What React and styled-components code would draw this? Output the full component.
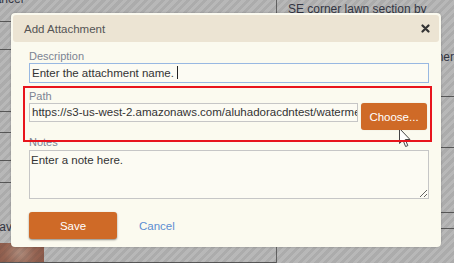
import React from "react";
import styled, { createGlobalStyle } from "styled-components";

const GlobalStyle = createGlobalStyle`
html, body {
  margin: 0;
  padding: 0;
}
body {
  width: 454px;
  height: 263px;
  overflow: hidden;
  background: #fff;
  font-family: "Liberation Sans", Arial, sans-serif;
}
`;

const Screen = styled.div`
position: relative;
width: 454px;
height: 263px;
overflow: hidden;
`;

/* the page that sits behind the modal */
const Page = styled.div`
display: flex;
margin-left: -14px;
color: #2b2f45;
font-size: 12px;
`;

const LeftCol = styled.div`
width: 328px;
display: flex;
flex-direction: column;
border-right: 1px solid #777;
`;

const RightCol = styled.div`
flex: 1;
display: flex;
flex-direction: column;
`;

const Cell = styled.div`
height: ${p => p.$h}px;
box-sizing: border-box;
border-bottom: 1px solid #666;
padding: ${p => p.$pad || "0 0 0 11px"};
line-height: 16px;
white-space: nowrap;
overflow: hidden;
`;

const Photo = styled.div`
width: 58px;
height: 28px;
margin-top: 8px;
background: radial-gradient(circle at 34px 10px, #f0b9a0 0, #c97a5e 40%, #a3523c 100%);
`;

const Overlay = styled.div`
position: absolute;
inset: 0;
background: repeating-linear-gradient(
  135deg,
  rgba(62, 62, 62, 0.43) 0 3px,
  rgba(62, 62, 62, 0.37) 3px 6px
);
`;

const Dialog = styled.div`
position: absolute;
left: 11px;
top: 13px;
width: 430px;
height: 234px;
box-sizing: border-box;
padding: 2px;
background: #fbfaef;
border-radius: 4px;
box-shadow: 0 0 2px rgba(0, 0, 0, 0.25);
`;

const Header = styled.div`
height: 27px;
display: flex;
align-items: center;
justify-content: space-between;
padding: 0 9px 0 11px;
background: #ece4d3;
border-radius: 3px;
`;

const Title = styled.span`
font-size: 11.5px;
color: #555;
`;

const Body = styled.div`
display: flex;
flex-direction: column;
padding: 7px 10px 0 16px;
`;

const Label = styled.div`
font-size: 11px;
line-height: 14px;
color: #7b8493;
`;

const Field = styled.div`
height: ${p => p.$h || 20}px;
box-sizing: border-box;
border: 1px solid ${p => (p.$focused ? "#98b8e2" : "#c6c6c6")};
background: #fcfbf3;
padding: 0 2px;
font-size: 11.5px;
line-height: ${p => (p.$h || 20) - 2}px;
color: #333;
white-space: nowrap;
overflow: hidden;
flex: ${p => (p.$grow ? 1 : "none")};
`;

const Caret = styled.span`
display: inline-block;
width: 1px;
height: 13px;
margin-left: 3px;
vertical-align: -2px;
background: #222;
`;

const Highlight = styled.div`
position: relative;
z-index: 1;
margin: 3px -3px -7px -6px;
padding: 1px 3px 10px 4px;
border: 2px solid #e8141c;
`;

const PathRow = styled.div`
display: flex;
align-items: flex-start;
gap: 3px;
`;

const Button = styled.button`
width: ${p => p.$w}px;
height: 27px;
border: none;
border-radius: 3px;
background: #cf6a27;
color: #fff;
font-family: "Liberation Sans", Arial, sans-serif;
font-size: 11.5px;
padding: 0;
box-shadow: ${p => (p.$raised ? "0 1px 2px rgba(0,0,0,0.45)" : "0 0 1px rgba(0,0,0,0.2)")};
cursor: pointer;
`;

const NoteArea = styled.textarea`
margin-top: 1px;
height: 49px;
box-sizing: border-box;
border: 1px solid #c6c6c6;
background: #fcfbf3;
padding: 3px 1px;
font-family: "Liberation Sans", Arial, sans-serif;
font-size: 11.5px;
color: #333;
outline: none;
resize: both;
`;

const Actions = styled.div`
display: flex;
align-items: center;
gap: 22px;
margin-top: 13px;
`;

const LinkButton = styled.span`
font-size: 11.5px;
color: #5b8ed2;
cursor: pointer;
`;

const Pointer = styled.svg`
position: absolute;
left: 399px;
top: 128px;
`;

function CloseIcon() {
  return (
    <svg width="9" height="9" viewBox="0 0 9 9">
      <path d="M1.5 1.5 L7.5 7.5 M7.5 1.5 L1.5 7.5" stroke="#333" strokeWidth="2.2" strokeLinecap="round" />
    </svg>
  );
}

export default function App() {
  return (
    <Screen>
      <GlobalStyle />
      <Page>
        <LeftCol>
          <Cell $h={22} $pad="0">
            <div style={{ marginTop: -9 }}>Cancel</div>
          </Cell>
          <Cell $h={28} />
          <Cell $h={62} />
          <Cell $h={21} />
          <Cell $h={28} />
          <Cell $h={22} />
          <Cell $h={80} $pad="36px 0 0 0">
            <div style={{ marginLeft: 0 }}>Leaves.</div>
            <Photo />
          </Cell>
        </LeftCol>
        <RightCol>
          <Cell $h={97} $pad="1px 0 0 11px">
            SE corner lawn section by
            <br />
            <br />
            <br />
            the back fence, near the corner
          </Cell>
          <Cell $h={51} $pad="28px 0 0 11px">Drainage pipe; pad</Cell>
          <Cell $h={65} $pad="28px 0 0 11px">Leaves</Cell>
          <Cell $h={16} />
        </RightCol>
      </Page>

      <Overlay />

      <Dialog>
        <Header>
          <Title>Add Attachment</Title>
          <CloseIcon />
        </Header>
        <Body>
          <Label>Description</Label>
          <Field $focused>
            Enter the attachment name.
            <Caret />
          </Field>
          <Highlight>
            <Label>Path</Label>
            <PathRow>
              <Field $h={19} $grow>
                https://s3-us-west-2.amazonaws.com/aluhadoracdntest/watermeter-photo.jpg
              </Field>
              <Button $w={66}>Choose...</Button>
            </PathRow>
          </Highlight>
          <Label>Notes</Label>
          <NoteArea readOnly defaultValue="Enter a note here." />
          <Actions>
            <Button $w={88} $raised>Save</Button>
            <LinkButton>Cancel</LinkButton>
          </Actions>
        </Body>
      </Dialog>

      <Pointer width="12" height="20" viewBox="0 0 12 20">
        <path d="M0.5 0.5 L0.5 15.5 L4 12.2 L6.6 18.5 L8.8 17.6 L6.3 11.5 L11 11.5 Z" fill="#fff" stroke="#444" strokeWidth="1" strokeLinejoin="round" />
      </Pointer>
    </Screen>
  );
}
